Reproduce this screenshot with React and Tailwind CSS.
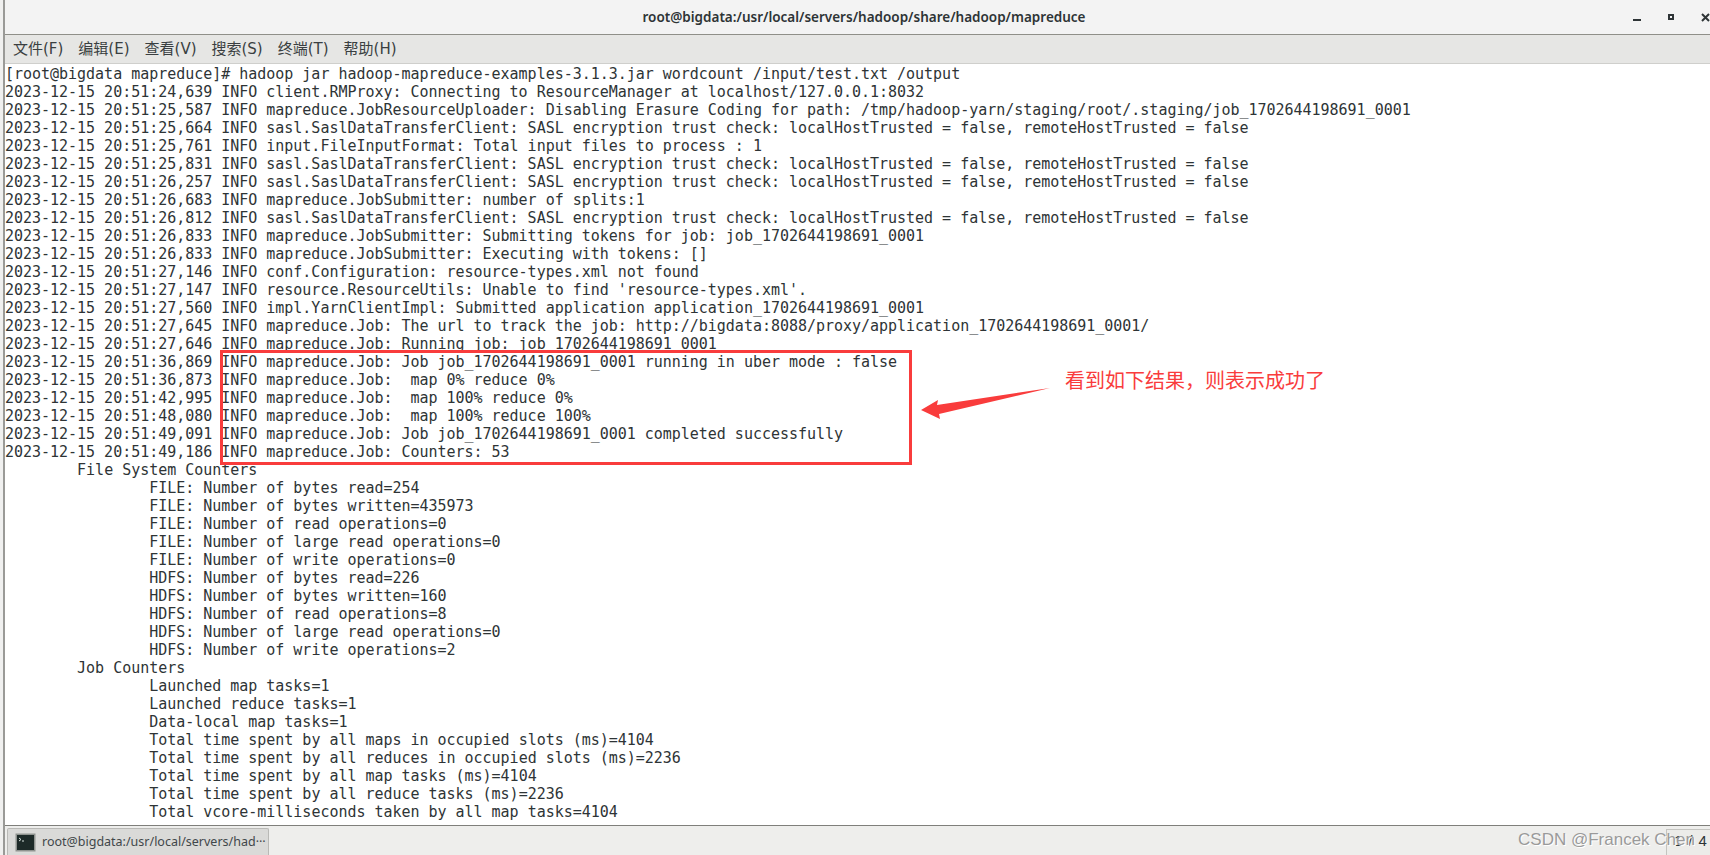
const menus = ['文件(F)', '编辑(E)', '查看(V)', '搜索(S)', '终端(T)', '帮助(H)'];

const lines = [
  '[root@bigdata mapreduce]# hadoop jar hadoop-mapreduce-examples-3.1.3.jar wordcount /input/test.txt /output',
  '2023-12-15 20:51:24,639 INFO client.RMProxy: Connecting to ResourceManager at localhost/127.0.0.1:8032',
  '2023-12-15 20:51:25,587 INFO mapreduce.JobResourceUploader: Disabling Erasure Coding for path: /tmp/hadoop-yarn/staging/root/.staging/job_1702644198691_0001',
  '2023-12-15 20:51:25,664 INFO sasl.SaslDataTransferClient: SASL encryption trust check: localHostTrusted = false, remoteHostTrusted = false',
  '2023-12-15 20:51:25,761 INFO input.FileInputFormat: Total input files to process : 1',
  '2023-12-15 20:51:25,831 INFO sasl.SaslDataTransferClient: SASL encryption trust check: localHostTrusted = false, remoteHostTrusted = false',
  '2023-12-15 20:51:26,257 INFO sasl.SaslDataTransferClient: SASL encryption trust check: localHostTrusted = false, remoteHostTrusted = false',
  '2023-12-15 20:51:26,683 INFO mapreduce.JobSubmitter: number of splits:1',
  '2023-12-15 20:51:26,812 INFO sasl.SaslDataTransferClient: SASL encryption trust check: localHostTrusted = false, remoteHostTrusted = false',
  '2023-12-15 20:51:26,833 INFO mapreduce.JobSubmitter: Submitting tokens for job: job_1702644198691_0001',
  '2023-12-15 20:51:26,833 INFO mapreduce.JobSubmitter: Executing with tokens: []',
  '2023-12-15 20:51:27,146 INFO conf.Configuration: resource-types.xml not found',
  "2023-12-15 20:51:27,147 INFO resource.ResourceUtils: Unable to find 'resource-types.xml'.",
  '2023-12-15 20:51:27,560 INFO impl.YarnClientImpl: Submitted application application_1702644198691_0001',
  '2023-12-15 20:51:27,645 INFO mapreduce.Job: The url to track the job: http://bigdata:8088/proxy/application_1702644198691_0001/',
  '2023-12-15 20:51:27,646 INFO mapreduce.Job: Running job: job_1702644198691_0001',
  '2023-12-15 20:51:36,869 INFO mapreduce.Job: Job job_1702644198691_0001 running in uber mode : false',
  '2023-12-15 20:51:36,873 INFO mapreduce.Job:  map 0% reduce 0%',
  '2023-12-15 20:51:42,995 INFO mapreduce.Job:  map 100% reduce 0%',
  '2023-12-15 20:51:48,080 INFO mapreduce.Job:  map 100% reduce 100%',
  '2023-12-15 20:51:49,091 INFO mapreduce.Job: Job job_1702644198691_0001 completed successfully',
  '2023-12-15 20:51:49,186 INFO mapreduce.Job: Counters: 53',
  '\tFile System Counters',
  '\t\tFILE: Number of bytes read=254',
  '\t\tFILE: Number of bytes written=435973',
  '\t\tFILE: Number of read operations=0',
  '\t\tFILE: Number of large read operations=0',
  '\t\tFILE: Number of write operations=0',
  '\t\tHDFS: Number of bytes read=226',
  '\t\tHDFS: Number of bytes written=160',
  '\t\tHDFS: Number of read operations=8',
  '\t\tHDFS: Number of large read operations=0',
  '\t\tHDFS: Number of write operations=2',
  '\tJob Counters ',
  '\t\tLaunched map tasks=1',
  '\t\tLaunched reduce tasks=1',
  '\t\tData-local map tasks=1',
  '\t\tTotal time spent by all maps in occupied slots (ms)=4104',
  '\t\tTotal time spent by all reduces in occupied slots (ms)=2236',
  '\t\tTotal time spent by all map tasks (ms)=4104',
  '\t\tTotal time spent by all reduce tasks (ms)=2236',
  '\t\tTotal vcore-milliseconds taken by all map tasks=4104',
];

export default function App() {
  return (
    <div className="relative flex w-[1710px] h-[855px] overflow-hidden bg-[#f0f0ef] font-['Liberation_Sans',sans-serif]">
      <div className="shrink-0 w-[3px]" />
      <div className="flex flex-col flex-1 min-w-0 border-l-2 border-[#9a9a97]">
        {/* title bar */}
        <div className="relative flex items-center justify-center shrink-0 h-[35px] pl-[13px] bg-[#f3f3f3] border-b border-b-[#8f8f89]">
          <span className="text-[13.5px] font-semibold text-[#2e3436] font-['Noto_Sans',sans-serif]">
            root@bigdata:/usr/local/servers/hadoop/share/hadoop/mapreduce
          </span>
          <div className="absolute right-0 top-[13px] flex items-start">
            <span className="w-[8px] h-[2px] mt-[6px] mr-[27px] bg-[#2e3436]" />
            <span className="w-[6px] h-[6px] mt-[1px] mr-[27px] border-2 border-[#2e3436]" />
            <svg width="9" height="9" viewBox="0 0 9 9">
              <path d="M1 1 8 8M8 1 1 8" stroke="#2e3436" strokeWidth="2" />
            </svg>
          </div>
        </div>

        {/* menu bar */}
        <div className="flex items-center shrink-0 h-[29px] gap-[15px] pl-[8px] bg-[#e6e6e4] border-b border-b-[#cfcfcc] text-[15px] text-[#3a3f41] font-['DejaVu_Sans','Noto_Sans_CJK_SC',sans-serif]">
          {menus.map((m) => (
            <span key={m}>{m}</span>
          ))}
        </div>

        {/* terminal */}
        <div className="flex-1 min-h-0 overflow-hidden bg-white">
          <pre className="pt-[1px] text-[15px] leading-[18px] tracking-[-0.02px] text-[#2e3436] font-['DejaVu_Sans_Mono',monospace] [tab-size:8]">
            {lines.join('\n')}
          </pre>
        </div>

        {/* taskbar */}
        <div className="relative flex items-end shrink-0 h-[30px] pl-[2px] bg-[#eeeeec] border-t border-[#7f7f7b]">
          <div className="flex items-center gap-[6px] w-[262px] h-[27px] pl-[7px] bg-[#dadad8] border border-b-0 border-[#b9b9b6] rounded-t-[2px] text-[12.5px] text-[#41474a] font-['Noto_Sans',sans-serif] whitespace-nowrap">
            <svg width="21" height="19" viewBox="0 0 21 19" className="shrink-0">
              <rect x="0.5" y="0.5" width="20" height="18" fill="#8f938f" />
              <rect x="2" y="2" width="17" height="15" fill="#1d2a28" />
              <path d="M4 5 6 6.5 4 8M7 8H9" fill="none" stroke="#d8e2dd" strokeWidth="1" />
            </svg>
            <span>root@bigdata:/usr/local/servers/had···</span>
          </div>
          <div className="absolute right-0 top-[3px] bottom-0 w-[44px] flex gap-[6px] pl-[7px] bg-[#ecece9] border-l border-t border-[#c4c4c0] text-[15px] text-[#2e3436] whitespace-nowrap">
            <span>1</span>
            <span>/</span>
            <span>4</span>
          </div>
          <span className="absolute right-[15px] top-[2px] text-[17px] leading-[24px] text-[#9a9a9a] [text-shadow:1px_1px_0_#fff]">
            CSDN @Francek Chen
          </span>
        </div>
      </div>

      {/* red annotation */}
      <div className="absolute left-[220px] top-[350px] w-[692px] h-[115px] border-[3px] border-[#f93c3c]" />
      <svg className="absolute left-[915px] top-[380px]" width="140" height="40" viewBox="0 0 140 40">
        <path d="M6 30 23 20 22 25 135 8 24 34 25 39Z" fill="#f93c3c" />
      </svg>
      <span className="absolute left-[1065px] top-[366px] text-[20px] leading-[28px] text-[#f93c3c] font-['Noto_Sans_CJK_SC',sans-serif] whitespace-nowrap">
        看到如下结果，则表示成功了
      </span>
    </div>
  );
}
